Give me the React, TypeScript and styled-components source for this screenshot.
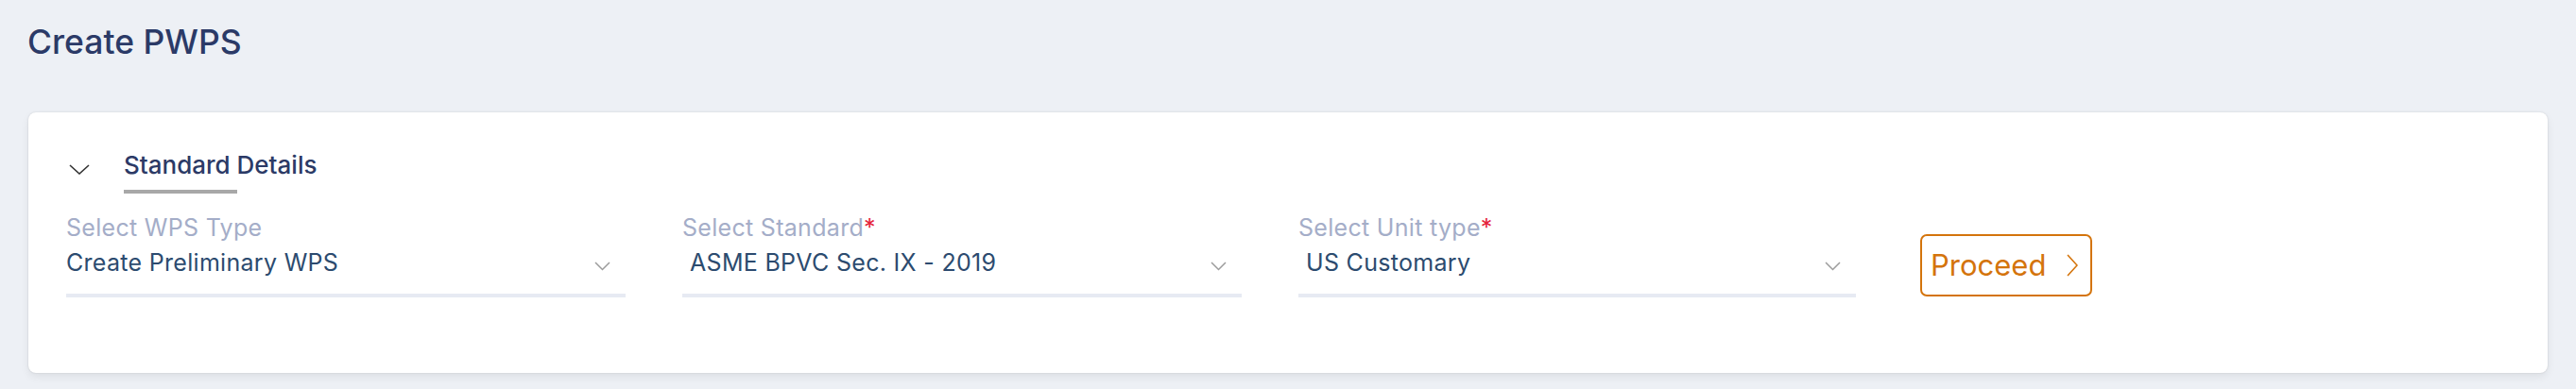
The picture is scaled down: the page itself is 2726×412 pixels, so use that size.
import React from "react";
import styled, { createGlobalStyle } from "styled-components";

const GlobalStyle = createGlobalStyle`
  html, body {
    margin: 0;
    padding: 0;
    background: #edf0f5;
  }
  body {
    font-family: "Inter", "Noto Sans", "Liberation Sans", sans-serif;
    -webkit-font-smoothing: antialiased;
  }
`;

const fields = [
  { label: "Select WPS Type", value: "Create Preliminary WPS", required: false, indent: false },
  { label: "Select Standard", value: "ASME BPVC Sec. IX - 2019", required: true, indent: true },
  { label: "Select Unit type", value: "US Customary", required: true, indent: true },
];

function App() {
  return (
    <>
      <GlobalStyle />
      <Page>
        <Title>Create PWPS</Title>
        <Card>
          <Header>
            <CollapseIcon width="22" height="11" viewBox="0 0 22 11">
              <path d="M1 1 L11 10 L21 1" />
            </CollapseIcon>
            <Tab>Standard Details</Tab>
          </Header>
          <FieldRow>
            {fields.map((f) => (
              <Field key={f.label}>
                <Label>
                  {f.label}
                  {f.required && <Required>*</Required>}
                </Label>
                <SelectBox>
                  <Value $indent={f.indent}>{f.value}</Value>
                  <DropIcon width="17" height="10" viewBox="0 0 17 10">
                    <path d="M1 1 L8.5 8.5 L16 1" />
                  </DropIcon>
                </SelectBox>
              </Field>
            ))}
            <ProceedButton>
              Proceed
              <svg width="12" height="24" viewBox="0 0 12 24">
                <path d="M1 1 L11 12 L1 23" />
              </svg>
            </ProceedButton>
          </FieldRow>
        </Card>
      </Page>
    </>
  );
}

const Page = styled.div`
  padding: 23px 30px 16px;
`;

const Title = styled.h1`
  margin: 0 0 52px -1px;
  font-size: 35.5px;
  line-height: 44px;
  font-weight: 500;
  color: #2b3a67;
`;

const Card = styled.div`
  background: #fff;
  border-radius: 8px;
  padding: 39px 40px 80px;
  box-shadow: 0 0 2px rgba(0, 0, 0, 0.14), 0 4px 10px rgba(0, 0, 0, 0.07);
`;

const Header = styled.div`
  display: flex;
  align-items: flex-start;
  gap: 36px;
  padding-left: 3px;
`;

const CollapseIcon = styled.svg`
  margin-top: 16px;
  fill: none;
  stroke: #333;
  stroke-width: 1.6;
`;

const Tab = styled.div`
  position: relative;
  font-size: 26px;
  line-height: 32px;
  font-weight: 500;
  color: #2c3a66;
  padding-bottom: 14.5px;
  padding-top: 0.5px;

  &::after {
    content: "";
    position: absolute;
    left: 0;
    bottom: 0;
    width: 120px;
    height: 4px;
    background: #a8a8a8;
  }
`;

const FieldRow = styled.div`
  display: grid;
  grid-template-columns: 592px 592px 590px auto;
  column-gap: 60px;
  align-items: start;
  margin-top: 21.5px;
`;

const Field = styled.div`
  display: flex;
  flex-direction: column;
`;

const Label = styled.div`
  font-size: 25px;
  line-height: 28px;
  letter-spacing: 0.3px;
  color: #a4adc8;
`;

const Required = styled.span`
  color: #e5243b;
`;

const SelectBox = styled.div`
  display: flex;
  justify-content: space-between;
  align-items: flex-start;
  margin-top: 9px;
  padding-bottom: 19px;
  border-bottom: 4px solid #e7eaf3;
`;

const Value = styled.div<{ $indent: boolean }>`
  font-size: 25px;
  line-height: 28px;
  letter-spacing: 0.3px;
  color: #2c4b6f;
  padding-left: ${(p) => (p.$indent ? "8px" : "0")};
`;

const DropIcon = styled.svg`
  margin-top: 13px;
  margin-right: 16px;
  fill: none;
  stroke: #9c9c9c;
  stroke-width: 1.5;
`;

const ProceedButton = styled.button`
  margin: 21px 0 0 8px;
  justify-self: start;
  width: 182px;
  height: 66px;
  box-sizing: border-box;
  display: flex;
  align-items: center;
  justify-content: space-between;
  padding: 0 13px 0 9px;
  background: #fff;
  border: 2px solid #d4740c;
  border-radius: 7px;
  font-family: inherit;
  font-size: 31px;
  line-height: 36px;
  color: #d4740c;
  cursor: pointer;

  svg {
    fill: none;
    stroke: #d4740c;
    stroke-width: 1.6;
  }
`;

export default App;
